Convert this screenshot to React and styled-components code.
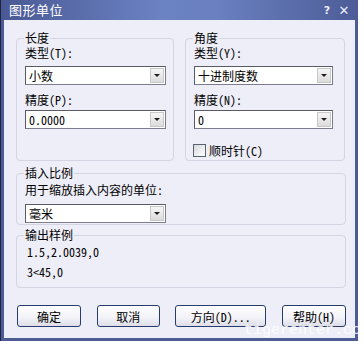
import styled, { createGlobalStyle } from 'styled-components';

const GlobalStyle = createGlobalStyle`
  html, body {
    margin: 0;
    padding: 0;
    background: #ffffff;
  }
  body {
    font-family: "Noto Sans Mono CJK SC", "Noto Sans CJK SC", sans-serif;
    font-size: 12px;
    color: #000;
  }
`;

const Screen = styled.div`
  position: relative;
  width: 364px;
  height: 346px;
  overflow: hidden;
  background: #ffffff;
`;

const Frame = styled.div`
  width: 358px;
  height: 341px;
  display: flex;
  flex-direction: column;
  box-sizing: border-box;
  background: #4d5c95;
  border-left: 1px solid #1e2440;
  padding: 0 3px 3px 3px;
`;

const TitleBar = styled.div`
  height: 20px;
  flex: none;
  display: flex;
  align-items: center;
  padding: 0 6px 0 4px;
  margin: 0 -3px;
  background: linear-gradient(90deg, #4a5994 0%, #6b82c3 45%, #6a80c0 60%, #4d5c98 100%);
  color: #ffffff;
`;

const Title = styled.div`
  flex: 1;
  font-family: "Noto Sans CJK SC", sans-serif;
  font-size: 13px;
  letter-spacing: 0.5px;
  line-height: 20px;
  padding-left: 4px;
`;

const TitleButton = styled.span`
  width: 16px;
  text-align: center;
  font-family: "DejaVu Sans", sans-serif;
  font-weight: bold;
  font-size: ${p => p.$size || 11}px;
  color: #e8ecf8;
  margin-left: ${p => p.$ml || 0}px;
`;

const Body = styled.div`
  flex: 1;
  background: #eeeef8;
  padding: 12px 9px 0 12px;
  display: flex;
  flex-direction: column;
`;

const TopRow = styled.div`
  display: flex;
  gap: 11px;
`;

const Group = styled.fieldset`
  margin: ${p => p.$mt || 0}px 0 0 0;
  padding: 0 8px ${p => p.$pb || 0}px 8px;
  border: 1px solid #d4d4e2;
  border-radius: 4px;
  min-width: 0;
  width: ${p => (p.$w ? p.$w + 'px' : 'auto')};
  box-sizing: border-box;
  display: flex;
  flex-direction: column;
`;

const Legend = styled.legend`
  padding: 0 1px;
  margin-left: -1px;
  line-height: 12px;
  height: 12px;
`;

const Label = styled.div`
  line-height: 14px;
  height: 14px;
  margin-top: ${p => p.$mt || 0}px;
  white-space: nowrap;
`;

const Select = styled.div`
  position: relative;
  width: ${p => p.$w}px;
  height: 19px;
  margin-top: ${p => p.$mt || 0}px;
  box-sizing: border-box;
  border: 1px solid #7c7c8c;
  border-top-color: #5a5a66;
  border-left-color: #5a5a66;
  background: #ffffff;
  display: flex;
  align-items: center;
  padding-left: 3px;
  line-height: 17px;
`;

const Value = styled.span`
  flex: 1;
  white-space: nowrap;
`;

const Arrow = styled.span`
  width: 14px;
  height: 15px;
  margin-right: 1px;
  box-sizing: border-box;
  border: 1px solid #c8c8c8;
  background: linear-gradient(180deg, #f6f6f6, #dcdcdc);
  display: flex;
  align-items: center;
  justify-content: center;
  &::after {
    content: '';
    border-left: 3px solid transparent;
    border-right: 3px solid transparent;
    border-top: 3px solid #202020;
  }
`;

const CheckRow = styled.label`
  display: flex;
  align-items: center;
  gap: 3px;
  height: 14px;
  margin-top: ${p => p.$mt || 0}px;
  margin-left: -1px;
`;

const CheckBox = styled.span`
  width: 13px;
  height: 13px;
  box-sizing: border-box;
  border: 1px solid #5a6270;
  background: linear-gradient(135deg, #d6d8dc, #ffffff);
`;

const Sample = styled.div`
  line-height: 14px;
  height: 14px;
  margin-top: ${p => p.$mt || 0}px;
  padding-left: 2px;
`;

const ButtonRow = styled.div`
  display: flex;
  justify-content: space-between;
  margin-top: 17px;
  padding-left: 1px;
`;

const Button = styled.button`
  width: ${p => p.$w}px;
  height: 22px;
  box-sizing: border-box;
  border: 1px solid #283c6c;
  border-radius: 3px;
  background: linear-gradient(180deg, #ffffff 0%, #f2f2f8 60%, #dedee8 100%);
  font-family: "Noto Sans Mono CJK SC", "Noto Sans CJK SC", sans-serif;
  font-size: 12px;
  color: #000;
  padding: 0;
`;

const Watermark = styled.div`
  position: absolute;
  left: 244px;
  top: 322px;
  font-family: "Liberation Mono", monospace;
  font-size: 15px;
  color: rgba(255, 255, 255, 0.85);
  white-space: nowrap;
  pointer-events: none;
`;

const Dropdown = ({ w, mt, children }) => (
  <Select $w={w} $mt={mt}>
    <Value>{children}</Value>
    <Arrow />
  </Select>
);

const App = () => (
  <Screen>
    <GlobalStyle />
    <Frame>
      <TitleBar>
        <Title>图形单位</Title>
        <TitleButton>?</TitleButton>
        <TitleButton $size={13} $ml={1}>✕</TitleButton>
      </TitleBar>
      <Body>
        <TopRow>
          <Group $w={158} $pb={3}>
            <Legend>长度</Legend>
            <Label $mt={2}>类型(T):</Label>
            <Dropdown w={141} mt={6}>小数</Dropdown>
            <Label $mt={8}>精度(P):</Label>
            <Dropdown w={141} mt={3}>0.0000</Dropdown>
          </Group>
          <Group $w={160} $pb={3}>
            <Legend>角度</Legend>
            <Label $mt={2}>类型(Y):</Label>
            <Dropdown w={139} mt={6}>十进制度数</Dropdown>
            <Label $mt={8}>精度(N):</Label>
            <Dropdown w={139} mt={3}>0</Dropdown>
            <CheckRow $mt={14}>
              <CheckBox />
              顺时针(C)
            </CheckRow>
          </Group>
        </TopRow>
        <Group $mt={6} $pb={1}>
          <Legend>插入比例</Legend>
          <Label $mt={4}>用于缩放插入内容的单位:</Label>
          <Dropdown w={141} mt={7}>毫米</Dropdown>
        </Group>
        <Group $mt={4} $pb={8}>
          <Legend>输出样例</Legend>
          <Sample $mt={4}>1.5,2.0039,0</Sample>
          <Sample $mt={6}>3&lt;45,0</Sample>
        </Group>
        <ButtonRow>
          <Button $w={64}>确定</Button>
          <Button $w={63}>取消</Button>
          <Button $w={91}>方向(D)...</Button>
          <Button $w={64}>帮助(H)</Button>
        </ButtonRow>
      </Body>
    </Frame>
    <Watermark>tigerenter.com</Watermark>
  </Screen>
);

export default App;
